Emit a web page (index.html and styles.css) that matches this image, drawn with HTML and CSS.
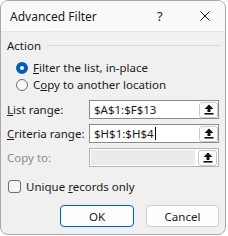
FILE: index.html
```html
<!DOCTYPE html>
<html lang="en">

<head>
    <meta charset="UTF-8">
    <title>Advanced Filter</title>
    <link rel="stylesheet" href="styles.css">
</head>

<body>
    <div class="window">
        <div class="titlebar">
            <span class="title">Advanced Filter</span>
            <span class="help">?</span>
            <span class="close">
                <svg width="10" height="10" viewBox="0 0 10 10">
                    <path d="M0.5 0.5 L9.5 9.5 M9.5 0.5 L0.5 9.5" stroke="#1a1a1a" stroke-width="1" fill="none" />
                </svg>
            </span>
        </div>

        <div class="content">
            <div class="group-head">
                <span>Action</span>
                <span class="rule"></span>
            </div>

            <div class="option">
                <span class="radio checked"></span>
                <span><u>F</u>ilter the list, in-place</span>
            </div>
            <div class="option">
                <span class="radio"></span>
                <span>C<u>o</u>py to another location</span>
            </div>

            <div class="fields">
                <div class="field">
                    <label><u>L</u>ist range:</label>
                    <div class="box">
                        <span class="value">$A$1:$F$13</span>
                        <span class="pick">
                            <svg width="10" height="11" viewBox="0 0 10 11">
                                <path d="M5 0.5 L9.5 5 L6.5 5 L6.5 8 L3.5 8 L3.5 5 L0.5 5 Z" fill="#111" />
                                <rect x="0.5" y="9" width="9" height="1.6" fill="#111" />
                            </svg>
                        </span>
                    </div>
                </div>
                <div class="field">
                    <label><u>C</u>riteria range:</label>
                    <div class="box">
                        <span class="value">$H$1:$H$4<span class="caret"></span></span>
                        <span class="pick">
                            <svg width="10" height="11" viewBox="0 0 10 11">
                                <path d="M5 0.5 L9.5 5 L6.5 5 L6.5 8 L3.5 8 L3.5 5 L0.5 5 Z" fill="#111" />
                                <rect x="0.5" y="9" width="9" height="1.6" fill="#111" />
                            </svg>
                        </span>
                    </div>
                </div>
                <div class="field disabled">
                    <label>Copy to:</label>
                    <div class="box">
                        <span class="value"></span>
                        <span class="pick">
                            <svg width="10" height="11" viewBox="0 0 10 11">
                                <path d="M5 0.5 L9.5 5 L6.5 5 L6.5 8 L3.5 8 L3.5 5 L0.5 5 Z" fill="#111" />
                                <rect x="0.5" y="9" width="9" height="1.6" fill="#111" />
                            </svg>
                        </span>
                    </div>
                </div>
            </div>

            <div class="check-row">
                <span class="checkbox"></span>
                <span>Unique <u>r</u>ecords only</span>
            </div>

            <div class="buttons">
                <button class="btn primary">OK</button>
                <button class="btn">Cancel</button>
            </div>
        </div>
    </div>
</body>

</html>
```

FILE: styles.css
```css
body {
    margin: 0;
    padding: 0;
    background-color: #fff;
    font-family: 'Noto Sans', sans-serif;
    font-size: 11.5px;
    color: #1a1a1a;
}

.window {
    width: 224px;
    height: 233px;
    border: 1px solid #a8a8a8;
    border-radius: 8px;
    overflow: hidden;
    background-color: #f0f0f0;
}

.titlebar {
    height: 30px;
    display: flex;
    align-items: center;
    background-color: #f9f9f9;
    border-bottom: 1px solid #e6e6e6;
}

.title {
    padding-left: 9px;
    flex: 1;
    font-size: 12px;
}

.help {
    width: 10px;
    margin-right: 33px;
    font-size: 13px;
}

.close {
    display: flex;
    margin-right: 15px;
}

.content {
    padding: 0 6px;
}

.group-head {
    display: flex;
    align-items: center;
    height: 16px;
    margin-top: 5px;
}

.rule {
    flex: 1;
    height: 1px;
    background-color: #d9d9d9;
    margin-left: 6px;
    margin-right: -2px;
}

.option {
    display: flex;
    align-items: center;
    height: 17px;
    padding-left: 9px;
}

.group-head + .option {
    margin-top: 6px;
}

.radio {
    width: 12px;
    height: 12px;
    border-radius: 50%;
    box-sizing: border-box;
    border: 1px solid #707070;
    background-color: #f7f7f7;
    margin-right: 5px;
}

.radio.checked {
    border: 4px solid #005fb8;
    background-color: #fff;
}

.fields {
    display: flex;
    flex-direction: column;
    gap: 5px;
    margin-top: 7px;
}

.field {
    display: flex;
    align-items: center;
    height: 19px;
}

.field label {
    width: 82px;
}

.box {
    flex: 1;
    height: 19px;
    box-sizing: border-box;
    border: 1px solid #8a8a8a;
    background-color: #fff;
    display: flex;
    align-items: center;
}

.value {
    flex: 1;
    padding-left: 4px;
    display: flex;
    align-items: center;
}

.caret {
    width: 1px;
    height: 13px;
    background-color: #000;
    margin-left: 1px;
}

.pick {
    width: 19px;
    height: 16px;
    box-sizing: border-box;
    border: 1px solid #c8c8c8;
    border-radius: 3px;
    background-color: #fdfdfd;
    display: flex;
    align-items: center;
    justify-content: center;
}

.disabled label {
    color: #8c8c8c;
}

.disabled .box {
    border-color: #b4b4b4;
    padding: 1px;
}

.disabled .value {
    align-self: stretch;
    background-color: #ebebeb;
    margin-right: 3px;
}

.check-row {
    display: flex;
    align-items: center;
    height: 16px;
    margin-top: 11px;
}

.checkbox {
    width: 13px;
    height: 13px;
    box-sizing: border-box;
    border: 1px solid #6f6f6f;
    border-radius: 3px;
    background-color: #f5f5f5;
    margin-left: 1px;
    margin-right: 5px;
}

.buttons {
    display: flex;
    justify-content: flex-end;
    gap: 12px;
    margin-top: 11px;
}

.btn {
    width: 73px;
    height: 22px;
    box-sizing: border-box;
    border: 1px solid #d0d0d0;
    border-radius: 4px;
    background-color: #fdfdfd;
    font-family: 'Noto Sans', sans-serif;
    font-size: 11.5px;
    color: #1a1a1a;
    padding: 0;
}

.btn.primary {
    width: 74px;
    border-color: #005fb8;
}
```
